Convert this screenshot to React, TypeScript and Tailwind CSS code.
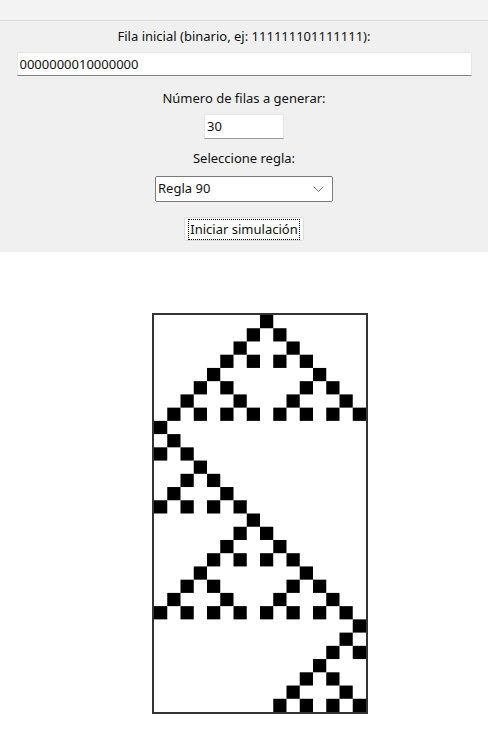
const initial = '0000000010000000';
const rows = 30;

function buildGrid(start: string, count: number) {
  let row = start.split('').map((c) => c === '1');
  const out: boolean[][] = [row];
  for (let r = 1; r < count; r++) {
    const next = row.map((_, i) => {
      const l = i > 0 ? row[i - 1] : false;
      const rr = i < row.length - 1 ? row[i + 1] : false;
      return l !== rr;
    });
    out.push(next);
    row = next;
  }
  return out;
}

const font = { fontFamily: '"Noto Sans", "Open Sans", sans-serif' };

export default function App() {
  const grid = buildGrid(initial, rows);
  const cols = initial.length;

  return (
    <div className="w-[488px] h-[755px] bg-white text-[#111] text-[13px]" style={font}>
      <div className="bg-[#f0f0f0] h-[252px] flex flex-col items-center">
        <div className="w-full h-[21px] bg-[#f3f3f3] border-b border-[#dcdcdc]" />
        <div className="mt-[6px] h-[18px] leading-[18px]">Fila inicial (binario, ej: 111111101111111):</div>
        <div className="mt-[7px] w-[455px] h-[24px] bg-white border border-[#e6e6e6] border-b-[#808080] pl-[2px] leading-[22px]">
          {initial}
        </div>
        <div className="mt-[13px] h-[18px] leading-[18px]">Número de filas a generar:</div>
        <div className="mt-[7px] w-[80px] h-[25px] bg-white border border-[#e6e6e6] border-b-[#9a9a9a] pl-[2px] leading-[23px]">
          30
        </div>
        <div className="mt-[10px] h-[18px] leading-[18px]">Seleccione regla:</div>
        <div className="mt-[9px] w-[178px] h-[26px] bg-white border border-[#7a7a7a] rounded-[2px] flex items-center justify-between pl-[2px] pr-[8px]">
          <span>Regla 90</span>
          <svg width="11" height="7" viewBox="0 0 11 7">
            <path d="M0.5 0.5 L5.5 5.5 L10.5 0.5" fill="none" stroke="#707070" strokeWidth="1" />
          </svg>
        </div>
        <div className="mt-[15px] w-[120px] h-[24px] bg-[#fdfdfd] border border-[#dcdcdc] rounded-[2px] flex items-center justify-center">
          <span className="border border-dotted border-black px-[1px] leading-[19px]">Iniciar simulación</span>
        </div>
      </div>

      <div className="mt-[61px] flex justify-center">
        <div className="border-2 border-[#333] ml-[32px]">
          <svg width="212" height="397" viewBox={`0 0 ${cols} ${rows}`} preserveAspectRatio="none" className="block">
            {grid.map((row, r) =>
              row.map((on, c) =>
                on ? <rect key={`${r}-${c}`} x={c} y={r} width="1" height="1" fill="#000" /> : null
              )
            )}
          </svg>
        </div>
      </div>
    </div>
  );
}
